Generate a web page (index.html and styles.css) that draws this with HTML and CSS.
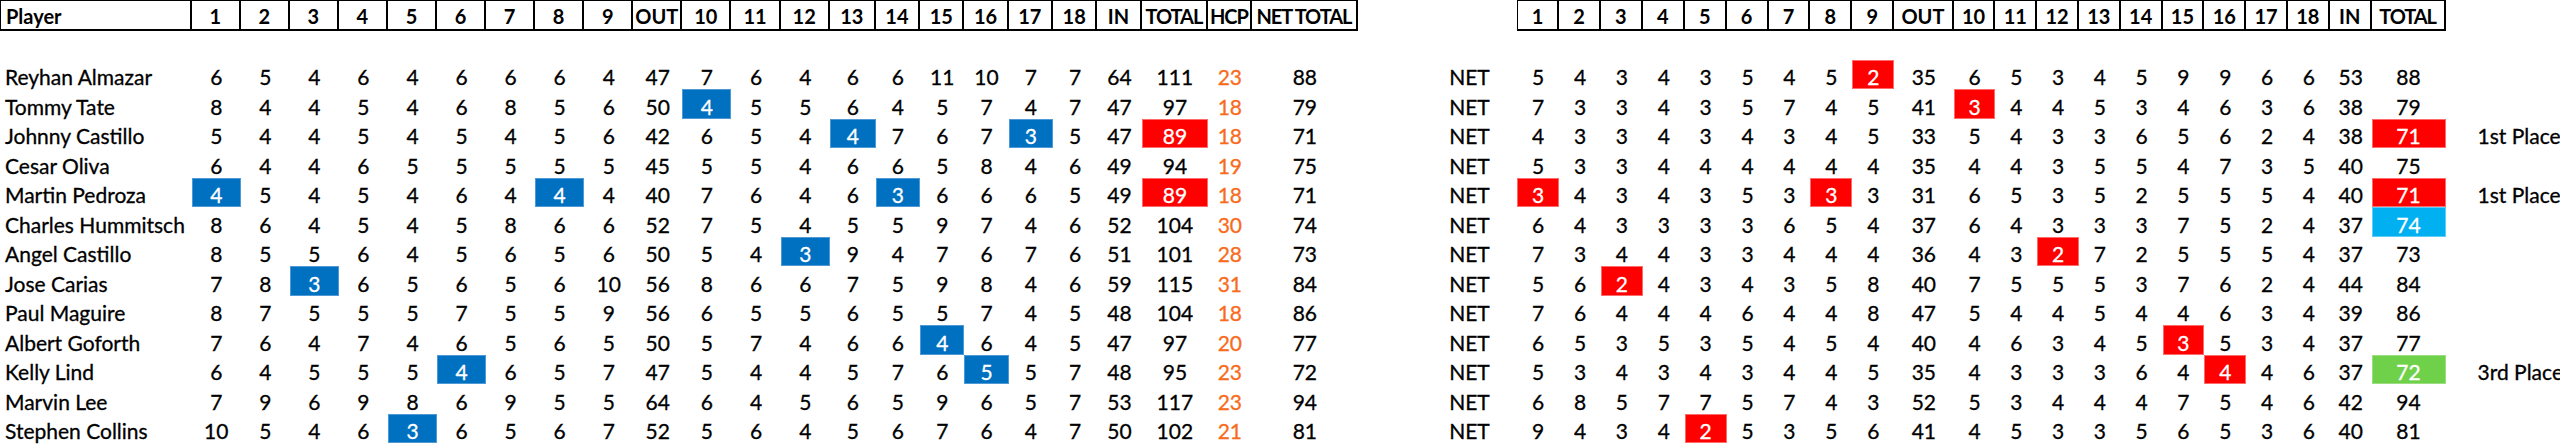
FILE: index.html
```html
<!DOCTYPE html>
<html>
<head>
<meta charset="utf-8">
<link rel="stylesheet" href="styles.css">
</head>
<body>
<div class="sheet">
  <div class="card gross">
    <div class="row head">
      <span class="name first">Player</span><span>1</span><span>2</span><span>3</span><span>4</span><span>5</span><span>6</span><span>7</span><span>8</span><span>9</span><span>OUT</span><span>10</span><span>11</span><span>12</span><span>13</span><span>14</span><span>15</span><span>16</span><span>17</span><span>18</span><span>IN</span><span class="tight">TOTAL</span><span class="tight">HCP</span><span class="tight">NET TOTAL</span>
    </div>
    <div class="blank"></div>
    <div class="row"><span class="name">Reyhan Almazar</span><span>6</span><span>5</span><span>4</span><span>6</span><span>4</span><span>6</span><span>6</span><span>6</span><span>4</span><span>47</span><span>7</span><span>6</span><span>4</span><span>6</span><span>6</span><span>11</span><span>10</span><span>7</span><span>7</span><span>64</span><span>111</span><span class="hcp">23</span><span>88</span></div>
    <div class="row"><span class="name">Tommy Tate</span><span>8</span><span>4</span><span>4</span><span>5</span><span>4</span><span>6</span><span>8</span><span>5</span><span>6</span><span>50</span><span class="blue">4</span><span>5</span><span>5</span><span>6</span><span>4</span><span>5</span><span>7</span><span>4</span><span>7</span><span>47</span><span>97</span><span class="hcp">18</span><span>79</span></div>
    <div class="row"><span class="name">Johnny Castillo</span><span>5</span><span>4</span><span>4</span><span>5</span><span>4</span><span>5</span><span>4</span><span>5</span><span>6</span><span>42</span><span>6</span><span>5</span><span>4</span><span class="blue">4</span><span>7</span><span>6</span><span>7</span><span class="blue">3</span><span>5</span><span>47</span><span class="red">89</span><span class="hcp">18</span><span>71</span></div>
    <div class="row"><span class="name">Cesar Oliva</span><span>6</span><span>4</span><span>4</span><span>6</span><span>5</span><span>5</span><span>5</span><span>5</span><span>5</span><span>45</span><span>5</span><span>5</span><span>4</span><span>6</span><span>6</span><span>5</span><span>8</span><span>4</span><span>6</span><span>49</span><span>94</span><span class="hcp">19</span><span>75</span></div>
    <div class="row"><span class="name">Martin Pedroza</span><span class="blue">4</span><span>5</span><span>4</span><span>5</span><span>4</span><span>6</span><span>4</span><span class="blue">4</span><span>4</span><span>40</span><span>7</span><span>6</span><span>4</span><span>6</span><span class="blue">3</span><span>6</span><span>6</span><span>6</span><span>5</span><span>49</span><span class="red">89</span><span class="hcp">18</span><span>71</span></div>
    <div class="row"><span class="name">Charles Hummitsch</span><span>8</span><span>6</span><span>4</span><span>5</span><span>4</span><span>5</span><span>8</span><span>6</span><span>6</span><span>52</span><span>7</span><span>5</span><span>4</span><span>5</span><span>5</span><span>9</span><span>7</span><span>4</span><span>6</span><span>52</span><span>104</span><span class="hcp">30</span><span>74</span></div>
    <div class="row"><span class="name">Angel Castillo</span><span>8</span><span>5</span><span>5</span><span>6</span><span>4</span><span>5</span><span>6</span><span>5</span><span>6</span><span>50</span><span>5</span><span>4</span><span class="blue">3</span><span>9</span><span>4</span><span>7</span><span>6</span><span>7</span><span>6</span><span>51</span><span>101</span><span class="hcp">28</span><span>73</span></div>
    <div class="row"><span class="name">Jose Carias</span><span>7</span><span>8</span><span class="blue">3</span><span>6</span><span>5</span><span>6</span><span>5</span><span>6</span><span>10</span><span>56</span><span>8</span><span>6</span><span>6</span><span>7</span><span>5</span><span>9</span><span>8</span><span>4</span><span>6</span><span>59</span><span>115</span><span class="hcp">31</span><span>84</span></div>
    <div class="row"><span class="name">Paul Maguire</span><span>8</span><span>7</span><span>5</span><span>5</span><span>5</span><span>7</span><span>5</span><span>5</span><span>9</span><span>56</span><span>6</span><span>5</span><span>5</span><span>6</span><span>5</span><span>5</span><span>7</span><span>4</span><span>5</span><span>48</span><span>104</span><span class="hcp">18</span><span>86</span></div>
    <div class="row"><span class="name">Albert Goforth</span><span>7</span><span>6</span><span>4</span><span>7</span><span>4</span><span>6</span><span>5</span><span>6</span><span>5</span><span>50</span><span>5</span><span>7</span><span>4</span><span>6</span><span>6</span><span class="blue">4</span><span>6</span><span>4</span><span>5</span><span>47</span><span>97</span><span class="hcp">20</span><span>77</span></div>
    <div class="row"><span class="name">Kelly Lind</span><span>6</span><span>4</span><span>5</span><span>5</span><span>5</span><span class="blue">4</span><span>6</span><span>5</span><span>7</span><span>47</span><span>5</span><span>4</span><span>4</span><span>5</span><span>7</span><span>6</span><span class="blue">5</span><span>5</span><span>7</span><span>48</span><span>95</span><span class="hcp">23</span><span>72</span></div>
    <div class="row"><span class="name">Marvin Lee</span><span>7</span><span>9</span><span>6</span><span>9</span><span>8</span><span>6</span><span>9</span><span>5</span><span>5</span><span>64</span><span>6</span><span>4</span><span>5</span><span>6</span><span>5</span><span>9</span><span>6</span><span>5</span><span>7</span><span>53</span><span>117</span><span class="hcp">23</span><span>94</span></div>
    <div class="row"><span class="name">Stephen Collins</span><span>10</span><span>5</span><span>4</span><span>6</span><span class="blue">3</span><span>6</span><span>5</span><span>6</span><span>7</span><span>52</span><span>5</span><span>6</span><span>4</span><span>5</span><span>6</span><span>7</span><span>6</span><span>4</span><span>7</span><span>50</span><span>102</span><span class="hcp">21</span><span>81</span></div>
  </div>

  <div class="card net">
    <div class="row head">
      <span class="net-label none"></span><span class="first">1</span><span>2</span><span>3</span><span>4</span><span>5</span><span>6</span><span>7</span><span>8</span><span>9</span><span>OUT</span><span>10</span><span>11</span><span>12</span><span>13</span><span>14</span><span>15</span><span>16</span><span>17</span><span>18</span><span>IN</span><span class="tight">TOTAL</span><span class="place none"></span>
    </div>
    <div class="blank"></div>
    <div class="row"><span class="net-label">NET</span><span>5</span><span>4</span><span>3</span><span>4</span><span>3</span><span>5</span><span>4</span><span>5</span><span class="red">2</span><span>35</span><span>6</span><span>5</span><span>3</span><span>4</span><span>5</span><span>9</span><span>9</span><span>6</span><span>6</span><span>53</span><span>88</span><span class="place"></span></div>
    <div class="row"><span class="net-label">NET</span><span>7</span><span>3</span><span>3</span><span>4</span><span>3</span><span>5</span><span>7</span><span>4</span><span>5</span><span>41</span><span class="red">3</span><span>4</span><span>4</span><span>5</span><span>3</span><span>4</span><span>6</span><span>3</span><span>6</span><span>38</span><span>79</span><span class="place"></span></div>
    <div class="row"><span class="net-label">NET</span><span>4</span><span>3</span><span>3</span><span>4</span><span>3</span><span>4</span><span>3</span><span>4</span><span>5</span><span>33</span><span>5</span><span>4</span><span>3</span><span>3</span><span>6</span><span>5</span><span>6</span><span>2</span><span>4</span><span>38</span><span class="red">71</span><span class="place">1st Place</span></div>
    <div class="row"><span class="net-label">NET</span><span>5</span><span>3</span><span>3</span><span>4</span><span>4</span><span>4</span><span>4</span><span>4</span><span>4</span><span>35</span><span>4</span><span>4</span><span>3</span><span>5</span><span>5</span><span>4</span><span>7</span><span>3</span><span>5</span><span>40</span><span>75</span><span class="place"></span></div>
    <div class="row"><span class="net-label">NET</span><span class="red">3</span><span>4</span><span>3</span><span>4</span><span>3</span><span>5</span><span>3</span><span class="red">3</span><span>3</span><span>31</span><span>6</span><span>5</span><span>3</span><span>5</span><span>2</span><span>5</span><span>5</span><span>5</span><span>4</span><span>40</span><span class="red">71</span><span class="place">1st Place</span></div>
    <div class="row"><span class="net-label">NET</span><span>6</span><span>4</span><span>3</span><span>3</span><span>3</span><span>3</span><span>6</span><span>5</span><span>4</span><span>37</span><span>6</span><span>4</span><span>3</span><span>3</span><span>3</span><span>7</span><span>5</span><span>2</span><span>4</span><span>37</span><span class="sky">74</span><span class="place"></span></div>
    <div class="row"><span class="net-label">NET</span><span>7</span><span>3</span><span>4</span><span>4</span><span>3</span><span>3</span><span>4</span><span>4</span><span>4</span><span>36</span><span>4</span><span>3</span><span class="red">2</span><span>7</span><span>2</span><span>5</span><span>5</span><span>5</span><span>4</span><span>37</span><span>73</span><span class="place"></span></div>
    <div class="row"><span class="net-label">NET</span><span>5</span><span>6</span><span class="red">2</span><span>4</span><span>3</span><span>4</span><span>3</span><span>5</span><span>8</span><span>40</span><span>7</span><span>5</span><span>5</span><span>5</span><span>3</span><span>7</span><span>6</span><span>2</span><span>4</span><span>44</span><span>84</span><span class="place"></span></div>
    <div class="row"><span class="net-label">NET</span><span>7</span><span>6</span><span>4</span><span>4</span><span>4</span><span>6</span><span>4</span><span>4</span><span>8</span><span>47</span><span>5</span><span>4</span><span>4</span><span>5</span><span>4</span><span>4</span><span>6</span><span>3</span><span>4</span><span>39</span><span>86</span><span class="place"></span></div>
    <div class="row"><span class="net-label">NET</span><span>6</span><span>5</span><span>3</span><span>5</span><span>3</span><span>5</span><span>4</span><span>5</span><span>4</span><span>40</span><span>4</span><span>6</span><span>3</span><span>4</span><span>5</span><span class="red">3</span><span>5</span><span>3</span><span>4</span><span>37</span><span>77</span><span class="place"></span></div>
    <div class="row"><span class="net-label">NET</span><span>5</span><span>3</span><span>4</span><span>3</span><span>4</span><span>3</span><span>4</span><span>4</span><span>5</span><span>35</span><span>4</span><span>3</span><span>3</span><span>3</span><span>6</span><span>4</span><span class="red">4</span><span>4</span><span>6</span><span>37</span><span class="lime">72</span><span class="place">3rd Place</span></div>
    <div class="row"><span class="net-label">NET</span><span>6</span><span>8</span><span>5</span><span>7</span><span>7</span><span>5</span><span>7</span><span>4</span><span>3</span><span>52</span><span>5</span><span>3</span><span>4</span><span>4</span><span>4</span><span>7</span><span>5</span><span>4</span><span>6</span><span>42</span><span>94</span><span class="place"></span></div>
    <div class="row"><span class="net-label">NET</span><span>9</span><span>4</span><span>3</span><span>4</span><span class="red">2</span><span>5</span><span>3</span><span>5</span><span>6</span><span>41</span><span>4</span><span>5</span><span>3</span><span>3</span><span>5</span><span>6</span><span>5</span><span>3</span><span>6</span><span>40</span><span>81</span><span class="place"></span></div>
  </div>
</div>
</body>
</html>
```

FILE: styles.css
```css
* { box-sizing: border-box; }

html, body {
  margin: 0;
  padding: 0;
  background: #ffffff;
}

body {
  font-family: Lato, "Open Sans", "Liberation Sans", sans-serif;
  font-size: 21px;
  color: #000000;
}

.sheet {
  display: flex;
  width: 2560px;
  height: 445px;
  overflow: hidden;
}

.card {
  display: flex;
  flex-direction: column;
}

.gross {
  width: 1358.33px;
  --cols: 191.7px repeat(9, 49.07px) 49px repeat(3, 49.2px) 46px repeat(6, 44.3px) 66.6px 43.4px 106.6px;
}

.net {
  flex: 1;
  --cols: 159px repeat(9, 41.9px) 59.4px repeat(10, 41.8px) 74px 1fr;
}

.row {
  display: grid;
  grid-template-columns: var(--cols);
  height: 29.5px;
}

.row > span {
  display: flex;
  align-items: flex-end;
  justify-content: center;
  line-height: 1.2;
  white-space: nowrap;
  -webkit-text-stroke: 0.3px currentColor;
}

.row.head {
  height: 31px;
}

.row.head > span {
  font-size: 20px;
  font-weight: 700;
  -webkit-text-stroke: 0;
  border-top: 1px solid #000;
  border-bottom: 2px solid #000;
  border-right: 2px solid #000;
  padding-bottom: 1px;
}

.row.head > span.tight {
  letter-spacing: -1.1px;
}

.row.head > span.first {
  border-left: 1px solid #000;
}

.row.head > span.none {
  border: 0;
}

.blank {
  height: 28.8px;
}

.row > span.name {
  justify-content: flex-start;
  padding-left: 5px;
}

.row > span.net-label {
  justify-content: flex-start;
  padding-left: 91px;
}

.row > span.place {
  justify-content: flex-start;
  padding-left: 32px;
}

.hcp {
  color: #f86b1c;
}

.blue {
  background: #0070c0;
  color: #ffffff;
  box-shadow: inset 0 0 0 1px #4f9ad6;
}

.red {
  background: #ff0000;
  color: #ffffff;
  box-shadow: inset 0 0 0 1px #ff6b6b;
}

.sky {
  background: #00b0f0;
  color: #ffffff;
  box-shadow: inset 0 0 0 1px #5fcdf5;
}

.lime {
  background: #6fd04a;
  color: #ffffff;
  box-shadow: inset 0 0 0 1px #9ade80;
}
```
